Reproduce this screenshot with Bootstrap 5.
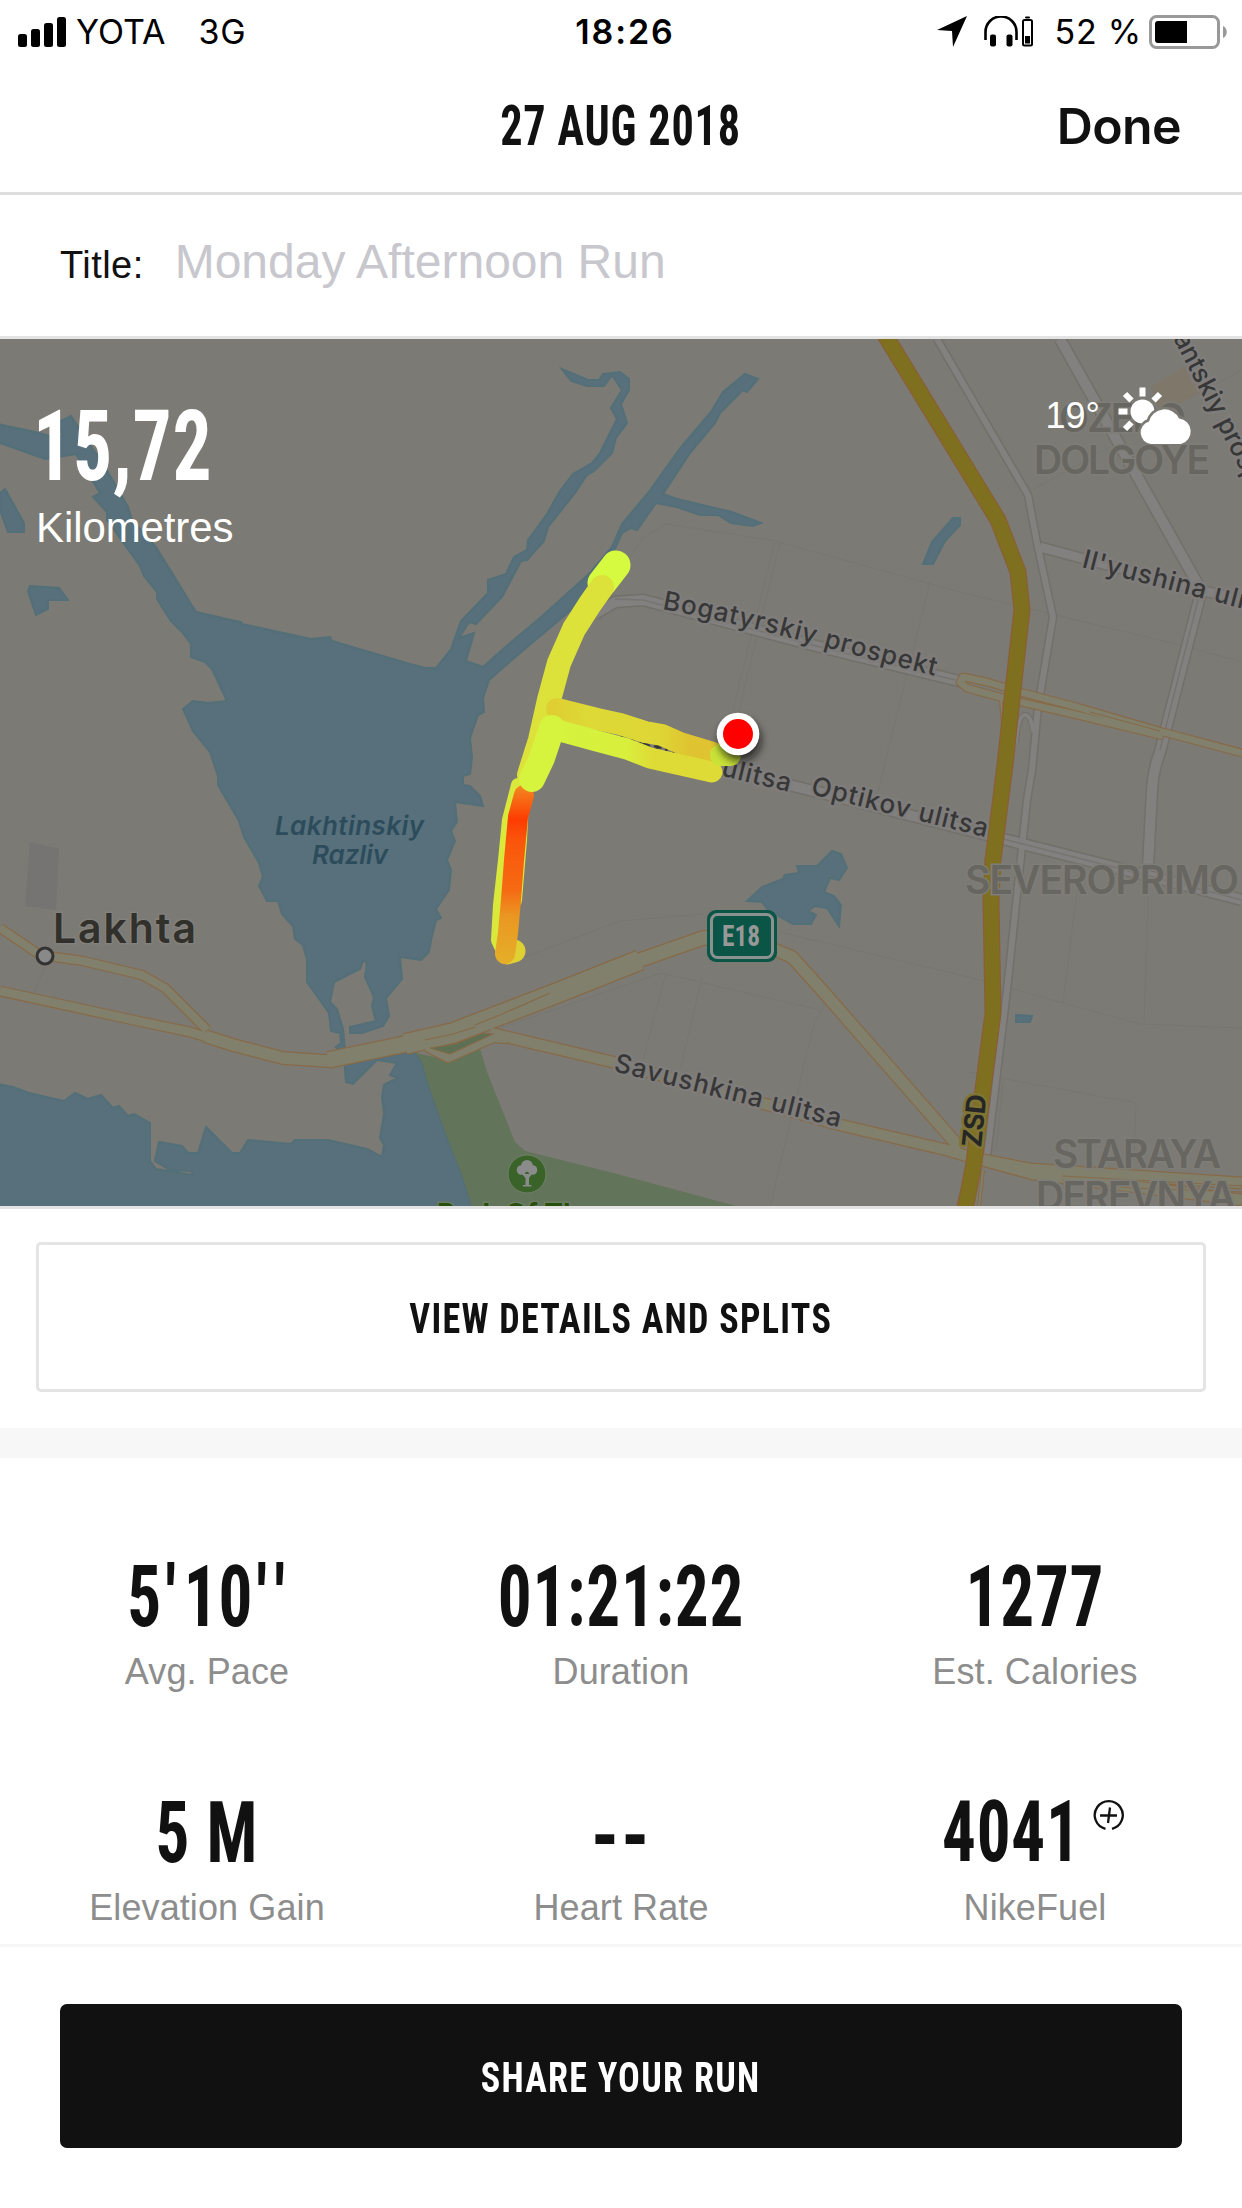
<!DOCTYPE html>
<html lang="en">
<head>
<meta charset="utf-8">
<meta name="viewport" content="width=device-width, initial-scale=1">
<title>27 AUG 2018</title>
<link href="https://cdn.jsdelivr.net/npm/bootstrap@5.3.0/dist/css/bootstrap.min.css" rel="stylesheet">
<style>
body{width:1242px;height:2208px;overflow:hidden;background:#fff;color:#111;font-family:"Liberation Sans",Arial,sans-serif}
.statusbar{height:63px;font:400 34px/63px Inter,sans-serif;color:#000;padding:0 15px 0 18px}
.statusbar svg{display:block;flex:none}
.clock{left:0;right:0;top:0;padding-left:8px;font-weight:600;letter-spacing:1.9px}
.carrier{margin-left:10px}
.network{margin-left:33px;letter-spacing:.8px}
.phones{margin-left:17px}
.percent{margin:0 7px 0 21px;letter-spacing:.8px}
.topbar{height:132px;border-bottom:3px solid #ddd;padding:0 61px 3px 0}
.cond{font-family:Roboto,sans-serif;font-weight:700;font-stretch:75%;white-space:nowrap;display:inline-block;transform:scaleX(var(--sx,1))}
.cond.start{transform-origin:0 50%}
.daytitle{font-size:55px;--sx:.805;letter-spacing:1px}
.donebtn{font:600 50px/60px Inter,sans-serif;color:#111;letter-spacing:-.6px}
.titlerow{height:144px;border-bottom:3px solid #e3e3e3;padding:37px 60px 0}
.titlerow label{font-size:38px;color:#111;letter-spacing:.45px}
.titlerow input{font-size:48px;padding:0 0 0 31px;line-height:60px;height:60px;color:#111;background:none}
.titlerow input::placeholder{color:#c7c7cd;opacity:1}
.mapbox{height:870px;border-bottom:3px solid #e3e3e3;background:#7c7a74}
.mapbox>svg{display:block}
.dist{left:36px;top:58px;color:#fff}
.dist .num{font-size:98px;line-height:100px;--sx:.79;letter-spacing:1px;margin-left:-3px}
.dist .unit{font-size:42px;line-height:50px;margin-top:6px;letter-spacing:-.1px}
.weather{right:48px;top:47px;color:#fff;font-size:36px;line-height:60px}
.weather .temp{margin-right:18px}
.splits{height:219px;padding:33px 36px 36px}
.splits .btn{border:3px solid #e4e4e4;border-radius:5px;color:#111;background:#fff;padding:0}
.btn .cond{font-size:43px;line-height:50px;--sx:.84;letter-spacing:1.5px;padding-top:2px}
.band{height:30px;background:#f7f7f7}
.stats{height:489px;padding-top:93px;border-bottom:3px solid #f7f7f7;row-gap:84px;align-content:flex-start}
.val{height:90px;font-size:86px;line-height:90px}
.val .cond{--sx:.78;letter-spacing:1px}
.val .cond.dashes{--sx:.92;letter-spacing:2px;padding-top:4px}
.val .cond.fuelnum{transform-origin:0 50%;margin-right:-27px;margin-left:-4px}
.g5{letter-spacing:5px}.g8{letter-spacing:9px}.g10{letter-spacing:10px}
.lbl{height:62px;line-height:62px;font-size:36px;color:#8d8d8d;letter-spacing:.1px}
.fuel{margin-top:13px}
.share{padding:57px 60px 60px}
.share .btn{height:144px;background:#111;color:#fff;border:0;border-radius:7px}
.water{fill:#57707b;stroke:#536f78;stroke-width:2}
.yc,.wc,.hc,.yf,.wf,.hf{fill:none;stroke-linejoin:round}
.yc{stroke:#876a48}.yf{stroke:#80806c}
.wc{stroke:#736f69}.wf{stroke:#828180}
.hc{stroke:#8a5f35}.hf{stroke:#7f7020}
.faint{fill:none;stroke:#787670;stroke-width:1}
.street{font:500 26px Inter,sans-serif;fill:#373737;stroke:#7f7d7b;stroke-width:5;paint-order:stroke;stroke-linejoin:round}
.area{font:600 39px Inter,sans-serif;fill:#686661;stroke:#7f7d78;stroke-width:3;paint-order:stroke}
.lake{font:italic 600 26px Inter,sans-serif;fill:#2c4c5b}
.route{fill:none;stroke-linecap:round;stroke-linejoin:round}
</style>
</head>
<body>
<div class="statusbar position-relative d-flex align-items-center">
  <svg width="48" height="30" viewBox="0 0 48 30"><rect y="17" width="9" height="13" rx="2.5"/><rect x="13" y="12" width="9" height="18" rx="2.5"/><rect x="26" y="6" width="9" height="24" rx="2.5"/><rect x="39" width="9" height="30" rx="2.5"/></svg>
  <span class="carrier">YOTA</span><span class="network">3G</span>
  <div class="clock position-absolute text-center">18:26</div>
  <svg class="ms-auto" width="30" height="31" viewBox="0 0 30 31"><path d="M30 0 16 31 15 15 0 14z"/></svg>
  <svg class="phones" width="49" height="31" viewBox="0 0 49 31"><path d="M1.500 24V16a15.500 15.500 0 0 1 31 0v8" fill="none" stroke="#000" stroke-width="2.600"/><rect x="6" y="18.500" width="6" height="12" rx="2"/><rect x="22.500" y="18.500" width="6" height="12" rx="2"/><rect x="39" y="4" width="9" height="25.500" rx="1.500" fill="none" stroke="#000" stroke-width="2"/><rect x="41" y="0.500" width="5" height="2" rx="1"/><rect x="41" y="20" width="5" height="7.500"/></svg>
  <span class="percent">52 %</span>
  <svg width="78" height="34" viewBox="0 0 78 34"><rect x="1.500" y="1.500" width="68" height="31" rx="6" fill="none" stroke="#999" stroke-width="3"/><path d="M6 9a3 3 0 0 1 3-3h29v22H9a3 3 0 0 1-3-3z"/><path d="M74 11c5 2 5 10 0 12z" fill="#999"/></svg>
</div>

<header class="topbar position-relative d-flex align-items-center justify-content-end">
  <div class="position-absolute start-0 end-0 text-center"><span class="cond daytitle">27 AUG 2018</span></div>
  <button class="donebtn btn p-0 border-0 position-relative" type="button">Done</button>
</header>

<form class="titlerow d-flex align-items-baseline">
  <label for="runTitle" class="text-nowrap">Title:</label>
  <input id="runTitle" class="form-control border-0 shadow-none" placeholder="Monday Afternoon Run">
</form>

<section class="mapbox position-relative overflow-hidden">
<svg width="1242" height="867" viewBox="0 339 1242 867">
  <defs>
    <filter id="soft" x="-50%" y="-50%" width="200%" height="200%"><feGaussianBlur stdDeviation="4"/></filter>
    <linearGradient id="heat" gradientUnits="userSpaceOnUse" x1="0" y1="785" x2="0" y2="960"><stop offset="0" stop-color="#f28a20"/><stop offset=".2" stop-color="#fe3c02"/><stop offset=".32" stop-color="#fa560b"/><stop offset=".6" stop-color="#f56a12"/><stop offset=".75" stop-color="#ea9722"/><stop offset="1" stop-color="#e5ad28"/></linearGradient>
    <linearGradient id="warm" gradientUnits="userSpaceOnUse" x1="555" y1="0" x2="715" y2="0"><stop offset="0" stop-color="#dfcf33"/><stop offset=".2" stop-color="#ddd935"/><stop offset=".65" stop-color="#ded635"/><stop offset=".85" stop-color="#dfc330"/></linearGradient>
    <linearGradient id="cool" gradientUnits="userSpaceOnUse" x1="555" y1="0" x2="715" y2="0"><stop offset="0" stop-color="#d5f33e"/><stop offset=".45" stop-color="#d8ef3c"/><stop offset=".6" stop-color="#dedb36"/></linearGradient>
    <path id="pBog" d="M662 609 Q745 625 825 647 T940 677"/>
    <path id="pAnt" d="M1173 338 L1214 418 L1266 520"/>
  </defs>
  <rect y="339" width="1242" height="867" fill="#7c7a74"/>
  <path d="M30 842 59 849 56 910 25 906z" fill="#767472"/>
  <path d="M1151 387 1187 365 1200 393 1160 413z" fill="#7f786a"/>
  <g class="faint">
    <path d="M630 557 643 538 666 524 775 541 960 592 1180 645 1242 662M775 541 733 710M780 542 738 715M930 582 883 770M877 795 885 765M1032 490 1110 447M1190 398 1242 370"/>
    <path d="M525 957 620 921 703 914M495 1030 661 973 820 1010M666 973 643 1060M702 978 680 1070M825 1005 815 1020 770 1206M780 932 985 981M1010 988 1063 1003 1140 1024 1242 1028M1077 890 1063 1003M1149 880 1144 1023M968 1072 1136 1103 1134 1160M1003 1082 996 1150M45 966 34 993"/>
  </g>
  <path class="water" d="M-3 424 35 432 53 437 63 436 57 423 71 416 105 467 128 507 132 520 156 547 196 612 241 622 242 624 311 639 330 637 332 641 410 664 425 668 436 668 451 649 461 621 488 593 488 580 506 574 514 557 527 550 528 540 547 514 560 491 573 474 592 463 600 453 617 419 611 408 622 390 612 375 604 386 587 386 571 381 562 369 588 380 599 380 603 374 620 372 629 379 629 390 621 404 627 423 616 438 612 453 594 471 587 475 575 493 548 527 544 541 527 560 521 561 502 597 476 624 469 622 459 638 474 633 466 661 483 667 510 643 540 618 590 573 612 547 622 524 648 493 681 447 711 412 723 392 745 374 758 379 747 392 743 390 720 413 715 423 690 453 663 494 677 499 732 512 761 523 753 526 731 523 718 515 700 515 677 507 656 503 637 530 631 528 622 533 610 560 577 605 520 653 489 680 483 698 484 712 478 715 470 738 472 757 470 774 463 776 463 785 470 786 480 796 483 806 455 802 457 822 451 831 455 841 447 860 451 870 449 890 436 909 441 918 436 920 431 940 429 952 421 960 400 957 402 979 386 998 389 1016 383 1026 362 1033 350 1033 350 1027 376 1021 372 1006 374 997 365 977 367 962 363 961 360 969 334 982 330 1002 337 1009 343 1029 345 1050 415 1053 422 1062 427 1080 433 1098 447 1137 462 1175 472 1209 -3 1209 -3 1084 13 1087 29 1093 64 1101 75 1093 88 1099 101 1095 113 1108 119 1106 128 1116 134 1114 150 1123 150 1161 156 1169 193 1175 191 1171 170 1170 155 1161 159 1142 182 1146 188 1153 198 1153 206 1127 232 1153 240 1153 248 1140 291 1144 295 1140 328 1140 367 1149 382 1157 384 1145 380 1138 384 1114 382 1097 384 1085 397 1078 390 1075 397 1063 377 1060 353 1084 346 1082 344 1055 336 1047 341 1043 340 1033 331 1031 329 1013 307 982 307 960 303 945 295 939 293 926 282 914 278 901 267 901 259 886 263 877 259 863 244 837 239 821 218 785 218 776 210 752 193 731 183 709 193 701 208 703 227 701 212 669 205 662 191 657 191 644 182 632 171 621 157 599 157 592 144 576 140 566 107 520 107 512 93 497 100 493 76 454 45 459 -3 442z"/>
  <path class="water" d="M0 493 5 489 24 523 24 532 8 532 0 510zM30 586 59 588 68 600 48 600 48 609 36 615 28 591zM953 518h7v7l-15 16-12 23h-10l9-22zM1016 1015l16 1-2 6h-14z"/>
  <path class="water" d="M747 901 762 887 783 879 785 875 799 873 797 866 817 866 832 851 841 854 847 868 839 880 830 878 824 892 834 896 841 905 839 926 827 908 815 906 808 911 816 915 811 924 793 924 768 910 762 902z"/>
  <path d="M415 1053 448 1060 480 1049 487 1072 515 1142 525 1151 617 1174 740 1207H472L462 1175 447 1137 433 1098 427 1080 422 1062z" fill="#627459"/>

  <!-- city streets -->
  <g class="wc">
    <path d="M937 339 1028 495 1037 543 1053 617 1038 707 1032 770 1027 800 1022 847 1007 990 987 1156" stroke-width="9"/>
    <path d="M1060 339 1200 588M1201 592 1160 752Q1153 770 1152 790L1148 867" stroke-width="13"/>
    <path d="M1040 547 1200 590 1242 600" stroke-width="12"/>
    <path d="M595 614 615 602 643 600 820 647 963 682M720 768 830 795 1003 839 1153 877 1242 900" stroke-width="13"/>
    <path d="M1016 743Q1018 715 1025 715 1031 715 1033 732" stroke-width="6"/>
  </g>
  <g class="wf">
    <path d="M937 339 1028 495 1037 543 1053 617 1038 707 1032 770 1027 800 1022 847 1007 990 987 1156" stroke-width="6"/>
    <path d="M1060 339 1200 588M1201 592 1160 752Q1153 770 1152 790L1148 867" stroke-width="10"/>
    <path d="M1040 547 1200 590 1242 600" stroke-width="9"/>
    <path d="M595 614 615 602 643 600 820 647 963 682M720 768 830 795 1003 839 1153 877 1242 900" stroke-width="10"/>
    <path d="M1016 743Q1018 715 1025 715 1031 715 1033 732" stroke-width="4"/>
  </g>
  <path d="M615 599 643 600 820 647 955 680M1003 839 1153 877 1242 900M1200 592 1160 750" fill="none" stroke="#777370" stroke-width="1.500"/>

  <!-- main roads -->
  <g class="yc">
    <path d="M0 928 40 955 83 961 142 975 165 988 207 1030M427 1047 448 1058 493 1038 507 1039" stroke-width="10.500"/>
    <path d="M0 991 133 1020 190 1032 233 1045" stroke-width="11"/>
    <path d="M205 1036 233 1045 283 1058 328 1061 360 1055" stroke-width="14"/>
    <path d="M328 1060 420 1041 453 1033" stroke-width="18"/>
    <path d="M405 1044 453 1033 557 993 640 960" stroke-width="22"/>
    <path d="M620 967 703 938 745 937" stroke-width="16"/>
    <path d="M745 937 792 957 820 988 960 1148" stroke-width="14"/>
    <path d="M490 1033 617 1063 840 1125 947 1150 967 1156 1033 1174 1242 1200M983 1160 1030 1169 1242 1183" stroke-width="13"/>
    <path d="M1242 753 1163 732 1077 707 1020 692 987 682 963 677 960 682 967 688 1003 698 1077 715 1163 736" stroke-width="9"/>
    <path d="M970 1163 958 1206M983 1170 979 1206M1001 700 1003 725" stroke-width="4"/>
  </g>
  <g class="yf">
    <path d="M0 928 40 955 83 961 142 975 165 988 207 1030M427 1047 448 1058 493 1038 507 1039" stroke-width="8"/>
    <path d="M0 991 133 1020 190 1032 233 1045" stroke-width="8.500"/>
    <path d="M205 1036 233 1045 283 1058 328 1061 360 1055" stroke-width="11.500"/>
    <path d="M328 1060 420 1041 453 1033" stroke-width="15.500"/>
    <path d="M405 1044 453 1033 557 993 640 960" stroke-width="19.500"/>
    <path d="M620 967 703 938 745 937" stroke-width="13.500"/>
    <path d="M745 937 792 957 820 988 960 1148" stroke-width="11.500"/>
    <path d="M490 1033 617 1063 840 1125 947 1150 967 1156 1033 1174 1242 1200M983 1160 1030 1169 1242 1183" stroke-width="10.500"/>
    <path d="M1242 753 1163 732 1077 707 1020 692 987 682 963 677 960 682 967 688 1003 698 1077 715 1163 736" stroke-width="6.500"/>
    <path d="M970 1163 958 1206M983 1170 979 1206M1001 700 1003 725" stroke-width="2"/>
  </g>
  <path d="M475 1025 500 1015 550 993M425 1040 453 1034 475 1027M1062 1176 1242 1186M1062 1180 1130 1188 1242 1192M1090 712 1160 731" fill="none" stroke="#876a48" stroke-width="1.200"/>
  <path d="M430 1048 455 1044 483 1033 493 1034 450 1054z" fill="#5d7053" stroke="#876a48" stroke-width="1.200"/>

  <!-- toll highway -->
  <path class="hc" stroke-width="17" d="M885 335 998 520 1018 572 1022 610 1013 690 1005 765 993 860 991 900 993 1013 982 1097 974 1163 965 1210"/>
  <path class="hf" stroke-width="14.500" d="M885 335 998 520 1018 572 1022 610 1013 690 1005 765 993 860 991 900 993 1013 982 1097 974 1163 965 1210"/>

  <!-- place names -->
  <text class="street"><textPath href="#pBog" textLength="281">Bogatyrskiy prospekt</textPath></text>
  <text class="street"><textPath href="#pAnt" textLength="204">antskiy prospekt</textPath></text>
  <text class="street" transform="translate(614 750) rotate(13.500)" textLength="180">Optikov ulitsa</text>
  <text class="street" transform="translate(810 794) rotate(13.800)" textLength="181">Optikov ulitsa</text>
  <text class="street" transform="translate(613 1071) rotate(14)" textLength="233">Savushkina ulitsa</text>
  <text class="street" transform="translate(1081 567) rotate(14.500)" textLength="207">Il'yushina ulitsa</text>
  <text class="street" transform="translate(981 1148) rotate(-84)" textLength="53" style="font-weight:700;font-size:27px;fill:#262626;stroke:#7f7535">ZSD</text>
  <text class="area" x="1059" y="432" textLength="127">OZERO</text>
  <text class="area" x="1034" y="474" textLength="176">DOLGOYE</text>
  <text class="area" x="965" y="894" textLength="274">SEVEROPRIMO</text>
  <text class="area" x="1053" y="1168" textLength="168">STARAYA</text>
  <text class="area" x="1036" y="1210" textLength="200">DEREVNYA</text>
  <text class="lake" x="275" y="835" textLength="149">Lakhtinskiy</text>
  <text class="lake" x="312" y="864" textLength="76">Razliv</text>
  <text x="53" y="943" textLength="143" style="font:600 41px Inter,sans-serif;fill:#31302b;stroke:#83817d;stroke-width:3;paint-order:stroke">Lakhta</text>
  <text x="437" y="1224" textLength="160" style="font:700 28px Inter,sans-serif;fill:#27500f;stroke:#6d7d62;stroke-width:3;paint-order:stroke">Park Of The</text>
  <circle cx="45" cy="956" r="8" fill="#898989" stroke="#333" stroke-width="3"/>
  <g>
    <rect x="707" y="910" width="70" height="52" rx="9" fill="#0a5546"/>
    <rect x="711.500" y="914.500" width="61" height="43" rx="6" fill="#0a5546" stroke="#8b918f" stroke-width="3"/>
    <text x="722" y="946" textLength="38" lengthAdjust="spacingAndGlyphs" style="font:700 29px Roboto,sans-serif;font-stretch:75%;fill:#989898">E18</text>
  </g>
  <circle cx="527" cy="1174" r="19" fill="#3a6329" stroke="#71806a" stroke-width="1"/>
  <g fill="#8b8b8b"><circle cx="527" cy="1166" r="6"/><circle cx="521.500" cy="1170" r="4.800"/><circle cx="532.500" cy="1170" r="4.800"/><path d="M525.500 1185V1178L522 1174h10l-3 4v7h2.500v1.500h-8.500V1185z"/></g>

  <!-- run trace -->
  <g class="route">
    <path d="M518 785 509 820 505 860 500 905 498 940 504 953" stroke="#d9e83a" stroke-width="14"/>
    <path d="M521 800 519 840 514 900" stroke="#d9e83a" stroke-width="16"/>
    <path d="M507 953 514 951" stroke="#dfd033" stroke-width="23"/>
    <path d="M616 565 602 583" stroke="#d6fa40" stroke-width="29"/>
    <path d="M602 587 590 604 574 629 559 663 549 700 540 740 529 775" stroke="#dce23a" stroke-width="24"/>
    <path d="M557 709 597 719 620 724 645 732 662 735 680 743 713 753" stroke="url(#warm)" stroke-width="22"/>
    <path d="M553 729 597 741 627 749 650 758 672 763 712 772" stroke="url(#cool)" stroke-width="21"/>
    <path d="M721 755 730 755" stroke="#c9e238" stroke-width="22"/>
    <path d="M524 795 518 817 514 860 511 900 508 933 505 954" stroke="url(#heat)" stroke-width="20"/>
    <path d="M552 728 542 758 532 779" stroke="#d6f33e" stroke-width="26"/>
  </g>
  <circle cx="740" cy="740" r="21" fill="#111" opacity=".75" filter="url(#soft)"/>
  <circle cx="738" cy="734" r="21.300" fill="#fff"/>
  <circle cx="738" cy="734" r="15" fill="#f00"/>
</svg>

<div class="dist position-absolute">
  <div><span class="cond start num d-block">15,72</span></div>
  <div class="unit">Kilometres</div>
</div>
<div class="weather position-absolute d-flex align-items-center">
  <span class="temp">19°</span>
  <svg width="76" height="58" viewBox="0 0 76 58" fill="#fff"><g stroke="#fff" stroke-width="6"><path d="M24.500 0.500v9M0.500 24.500h9M7 7l6.500 6.500M42 7l-6.500 6.500M7 42l6.500-6.500" /></g><circle cx="24.500" cy="24.500" r="12"/><path d="M33 57a11.500 11.500 0 0 1-2-22.500 16 16 0 0 1 30-3 13 13 0 0 1 2 25.500z" stroke="#7c7a74" stroke-width="5" paint-order="stroke"/></svg>
</div>
</section>

<section class="splits d-flex">
  <button class="btn w-100 h-100" type="button"><span class="cond">VIEW DETAILS AND SPLITS</span></button>
</section>
<div class="band"></div>

<section class="stats row g-0 text-center">
  <div class="col-4"><div class="val"><span class="cond"><span class="g5">5</span><span class="g10">'</span>1<span class="g5">0</span><span class="g8">'</span>'</span></div><div class="lbl">Avg. Pace</div></div>
  <div class="col-4"><div class="val"><span class="cond">01:21:22</span></div><div class="lbl">Duration</div></div>
  <div class="col-4"><div class="val"><span class="cond">1277</span></div><div class="lbl">Est. Calories</div></div>
  <div class="col-4"><div class="val"><span class="cond">5 M</span></div><div class="lbl">Elevation Gain</div></div>
  <div class="col-4"><div class="val"><span class="cond dashes">--</span></div><div class="lbl">Heart Rate</div></div>
  <div class="col-4"><div class="val d-flex justify-content-center align-items-start"><span class="cond fuelnum">4041</span><svg class="fuel" width="31" height="31" viewBox="0 0 31 31" fill="none" stroke="#111" stroke-width="2.300"><path d="M12.500 28.800A14 14 0 1 1 19 28.800M7 15.500h17M17 7.500 15 23"/></svg></div><div class="lbl">NikeFuel</div></div>
</section>

<footer class="share"><button class="btn w-100 p-0" type="button"><span class="cond">SHARE YOUR RUN</span></button></footer>
<script src="https://cdn.jsdelivr.net/npm/bootstrap@5.3.0/dist/js/bootstrap.bundle.min.js"></script>
</body>
</html>
